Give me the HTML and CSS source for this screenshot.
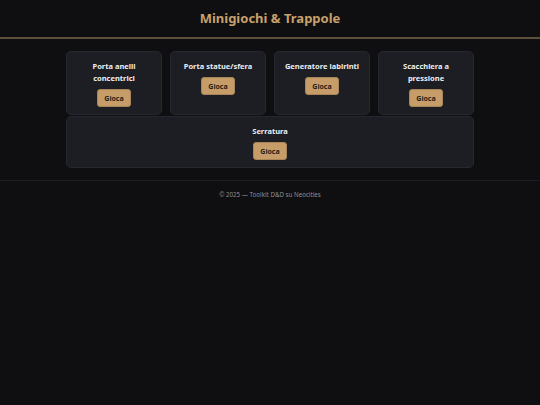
FILE: index.html
```html
<!DOCTYPE html>
<html lang="it">
<head>
<meta charset="utf-8">
<title>Minigiochi &amp; Trappole</title>
<link rel="stylesheet" href="styles.css">
</head>
<body>
<header class="site-header">
  <h1 class="site-title">Minigiochi &amp; Trappole</h1>
</header>
<main class="content">
  <div class="games">
    <div class="card">
      <h2 class="card-title">Porta anelli concentrici</h2>
      <button class="play">Gioca</button>
    </div>
    <div class="card">
      <h2 class="card-title">Porta statue/sfera</h2>
      <button class="play">Gioca</button>
    </div>
    <div class="card">
      <h2 class="card-title">Generatore labirinti</h2>
      <button class="play">Gioca</button>
    </div>
    <div class="card">
      <h2 class="card-title">Scacchiera a pressione</h2>
      <button class="play">Gioca</button>
    </div>
    <div class="card card-wide">
      <h2 class="card-title">Serratura</h2>
      <button class="play">Gioca</button>
    </div>
  </div>
</main>
<footer class="site-footer">© 2025 — Toolkit D&amp;D su Neocities</footer>
</body>
</html>
```
FILE: styles.css
```css
* { box-sizing: border-box; }
html, body {
  margin: 0;
  background: #0f0f11;
  font-family: "Noto Sans", "Open Sans", sans-serif;
  color: #e6e6e8;
}
.site-header {
  height: 39px;
  border-bottom: 2px solid #5e4e3c;
  display: flex;
  align-items: center;
  justify-content: center;
}
.site-title {
  margin: 0;
  font-size: 13px;
  font-weight: 700;
  color: #c8a06c;
  line-height: 1;
  padding-bottom: 1px;
}
.content {
  padding: 12px 66px 12px;
}
.games {
  display: grid;
  grid-template-columns: repeat(4, 1fr);
  column-gap: 8px;
  row-gap: 1px;
}
.card {
  background: #1c1e23;
  border: 1px solid #252831;
  border-radius: 5px;
  padding: 8px 8px 7px;
  display: flex;
  flex-direction: column;
  align-items: center;
  text-align: center;
}
.card-wide { grid-column: 1 / -1; }
.card-title {
  margin: 0;
  font-size: 7.5px;
  font-weight: 700;
  line-height: 12px;
  color: #eceef2;
}
.play {
  margin-top: 5px;
  height: 18px;
  padding: 0 6px;
  border: 1px solid #a88458;
  border-radius: 3px;
  background: #c69d68;
  color: #2a1e12;
  font-family: inherit;
  font-size: 7px;
  font-weight: 700;
}
.site-footer {
  border-top: 1px solid #1c1d22;
  padding: 9px 0;
  text-align: center;
  font-size: 6.2px;
  color: #8b8e97;
}
```
